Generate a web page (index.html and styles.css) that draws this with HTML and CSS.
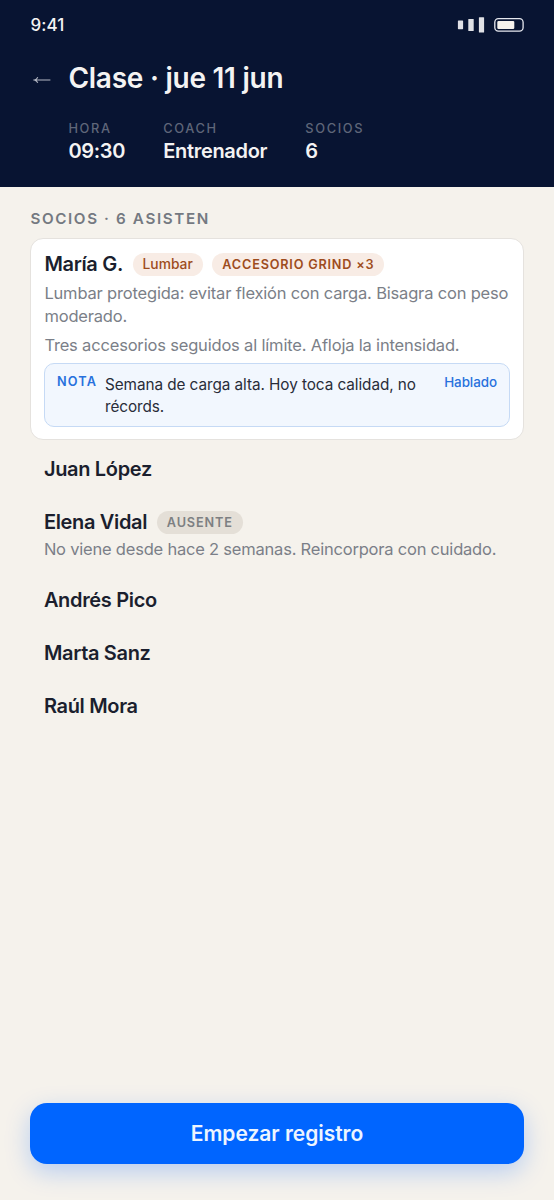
FILE: index.html
```html
<!DOCTYPE html>
<html lang="es">
<head>
<meta charset="utf-8">
<meta name="viewport" content="width=device-width, initial-scale=1">
<title>Clase · jue 11 jun</title>
<link rel="stylesheet" href="styles.css">
</head>
<body>
<div class="screen">
  <header class="header">
    <div class="statusbar">
      <span class="time">9:41</span>
      <svg class="status-icons" width="68" height="18" viewBox="0 0 68 18" aria-hidden="true">
        <g fill="#e0e1e6">
          <rect x="1.9" y="4.4" width="5.2" height="8.8" rx="0.6"/>
          <rect x="12.3" y="3" width="5.4" height="12" rx="0.6"/>
          <rect x="22.9" y="1.2" width="5.2" height="15.4" rx="0.6"/>
        </g>
        <rect x="38.8" y="2.6" width="28.3" height="12.6" rx="3.6" fill="none" stroke="#e6e8ef" stroke-width="1.3"/>
        <rect x="41.3" y="4.9" width="17" height="8" rx="1.2" fill="#f5f2ed"/>
      </svg>
    </div>
    <div class="titlebar">
      <svg class="back" width="18" height="10" viewBox="0 0 18 10" aria-hidden="true">
        <path d="M17.4 5H1.6M4.8 2.2Q3.6 4.4 1.4 5Q3.6 5.6 4.8 7.8" fill="none" stroke="#b4b8c4" stroke-width="1.1"/>
      </svg>
      <h1 class="title">Clase · jue 11 jun</h1>
    </div>
    <dl class="meta">
      <div class="meta-item"><dt>HORA</dt><dd>09:30</dd></div>
      <div class="meta-item"><dt>COACH</dt><dd>Entrenador</dd></div>
      <div class="meta-item"><dt>SOCIOS</dt><dd>6</dd></div>
    </dl>
  </header>
  <main class="content">
    <h2 class="section-title">SOCIOS · 6 ASISTEN</h2>
    <article class="member member-card">
      <div class="member-head">
        <span class="name">María G.</span>
        <span class="chip chip-zone">Lumbar</span>
        <span class="chip chip-alert">ACCESORIO GRIND ×3</span>
      </div>
      <p class="detail">Lumbar protegida: evitar flexión con carga. Bisagra con peso moderado.</p>
      <p class="detail detail-next">Tres accesorios seguidos al límite. Afloja la intensidad.</p>
      <div class="note">
        <span class="note-label">NOTA</span>
        <p class="note-text">Semana de carga alta. Hoy toca calidad, no récords.</p>
        <span class="note-action">Hablado</span>
      </div>
    </article>
    <article class="member"><div class="member-head"><span class="name">Juan López</span></div></article>
    <article class="member">
      <div class="member-head"><span class="name">Elena Vidal</span><span class="chip chip-absent">AUSENTE</span></div>
      <p class="detail detail-tight">No viene desde hace 2 semanas. Reincorpora con cuidado.</p>
    </article>
    <article class="member"><div class="member-head"><span class="name">Andrés Pico</span></div></article>
    <article class="member"><div class="member-head"><span class="name">Marta Sanz</span></div></article>
    <article class="member"><div class="member-head"><span class="name">Raúl Mora</span></div></article>
  </main>
  <footer class="footer"><button class="cta" type="button">Empezar registro</button></footer>
</div>
</body>
</html>
```
FILE: styles.css
```css
* { box-sizing: border-box; margin: 0; padding: 0; }
body { background: #f5f2ec; font-family: Inter, "Liberation Sans", sans-serif; color: #1b1f2e; }
.screen { height: 1200px; display: flex; flex-direction: column; }
.header { height: 187px; background: #081432; color: #f4f3f3; padding: 14px 30.4px 0; }
.statusbar { display: flex; justify-content: space-between; height: 22px; align-items: center; }
.time { font-size: 17px; line-height: 22px; font-weight: 500; letter-spacing: 0.1px; }
.status-icons { display: block; }
.titlebar { display: flex; align-items: center; height: 36px; margin-top: 24px; padding-left: 3px; gap: 17px; }
.back { margin-top: 4px; flex: none; }
.title { font-size: 28px; line-height: 36px; font-weight: 600; letter-spacing: -0.25px; }
.meta { display: flex; gap: 38px; padding-left: 38px; margin-top: 24px; }
.meta dt { font-size: 12.8px; line-height: 16px; font-weight: 500; letter-spacing: 1.65px; margin-right: -2px; color: #5f6679; padding-top: 0.6px; }
.meta dd { font-size: 20px; line-height: 26px; font-weight: 600; letter-spacing: -0.3px; margin-top: 1.4px; }
.content { flex: 1; padding: 23px 30.4px 0; }
.section-title { font-size: 15.2px; line-height: 18px; font-weight: 600; letter-spacing: 1.63px; color: #747981; margin-bottom: 10px; }
.member { padding: 13.5px 13.5px; }
.member-card { background: #fff; border: 1px solid #e5e2de; border-radius: 13px; padding: 12px 13px; height: 202px; margin-bottom: 2.5px; }
.member-head { display: flex; align-items: center; gap: 9.6px; height: 26px; }
.name { font-size: 20px; line-height: 26px; font-weight: 600; letter-spacing: -0.33px; white-space: nowrap; }
.chip { height: 23px; line-height: 23px; border-radius: 12px; padding: 0 10px; white-space: nowrap; font-size: 13.8px; }
.chip-zone { background: #f8ece5; color: #9e4c1d; font-weight: 500; }
.chip-alert { background: #f8ece5; color: #9e4c1d; font-weight: 600; font-size: 12.7px; letter-spacing: 0.8px; }
.chip-absent { background: #e4dfd7; color: #7d7f82; font-weight: 600; font-size: 12.7px; letter-spacing: 0.87px; }
.detail { font-size: 16.5px; line-height: 23px; letter-spacing: -0.18px; color: #7b7f88; margin-top: 5px; }
.detail-next { margin-top: 6px; }
.detail-tight { margin-top: 2px; padding-top: 0.5px; height: 23px; letter-spacing: -0.21px; }
.note { display: flex; align-items: flex-start; height: 64px; border: 1px solid #c6daf5; border-radius: 10px; background: #f2f7fe; padding: 10px 11.6px; margin-top: 6px; }
.note-label { font-size: 12.7px; line-height: 16px; font-weight: 600; letter-spacing: 1.2px; color: #2871dd; width: 48px; flex: none; }
.note-text { flex: 1; font-size: 15.3px; line-height: 22px; letter-spacing: -0.06px; color: #282c39; }
.note-action { font-size: 13.4px; line-height: 17px; font-weight: 500; letter-spacing: -0.05px; color: #2871dd; margin-left: 20px; }
.footer { padding: 0 30.4px 36.5px; }
.cta { display: block; width: 100%; height: 61px; border: 0; border-radius: 17px; background: #0065ff; color: #edf5ff; font: 600 21px Inter, sans-serif; letter-spacing: -0.03px; box-shadow: 0 8px 24px rgba(0, 101, 255, 0.25); }
```
